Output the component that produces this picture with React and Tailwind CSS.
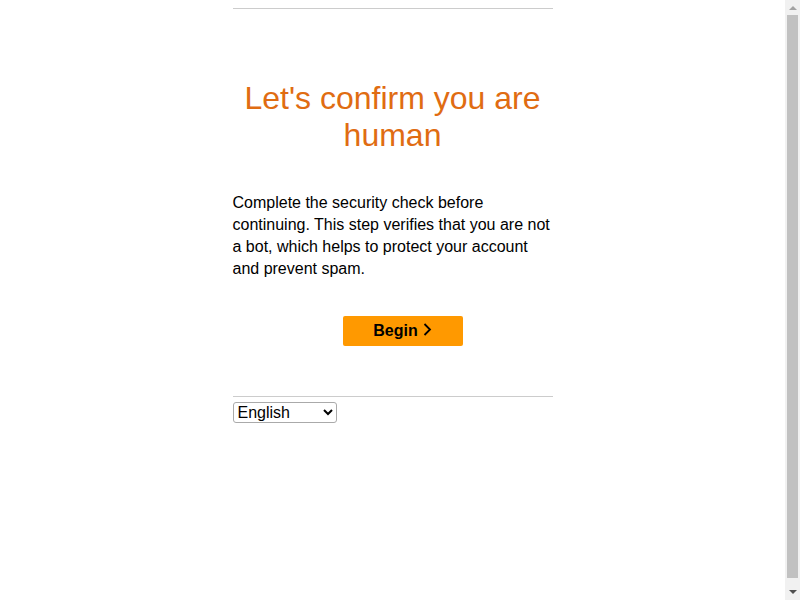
function Scrollbar() {
  return (
    <div className="flex h-[600px] w-[15px] shrink-0 flex-col bg-[#f1f1f1]">
      <div className="flex h-[15px] items-center justify-center">
        <svg width="8" height="5" viewBox="0 0 8 5">
          <path d="M0 5 L4 1 L8 5 Z" fill="#a3a3a3" />
        </svg>
      </div>
      <div className="mx-[2px] h-[563px] bg-[#c1c1c1]" />
      <div className="flex-1" />
      <div className="flex h-[15px] items-center justify-center">
        <svg width="8" height="5" viewBox="0 0 8 5">
          <path d="M0 0 L8 0 L4 4 Z" fill="#505050" />
        </svg>
      </div>
    </div>
  );
}

export default function App() {
  return (
    <div className="flex h-[600px] overflow-hidden bg-white font-['Liberation_Sans',Arial,sans-serif] text-black">
      <main className="flex-1 pt-2">
        <div className="mx-auto w-[320px]">
          <div className="border-t border-[#cccccc]" />

          <h1 className="mt-[71px] text-center text-[32px] leading-[37px] text-[#e06c12]">
            Let's confirm you are human
          </h1>

          <p className="mt-[38px] text-[16px] leading-[22px]">
            Complete the security check before continuing. This step verifies that you are not a bot, which helps to
            protect your account and prevent spam.
          </p>

          <div className="mt-[36px] flex justify-center pl-[20px]">
            <button className="flex h-[30px] w-[120px] items-center justify-center gap-[5px] rounded-[2px] bg-[#ff9900] text-[16px] font-bold">
              Begin
              <svg className="-mt-[3px]" width="9" height="13" viewBox="0 0 9 13" fill="none" stroke="black" strokeWidth="1.8">
                <path d="M1.5 1 L7 6.5 L1.5 12" />
              </svg>
            </button>
          </div>

          <div className="mt-[50px] border-t border-[#cccccc]" />
          <select className="mt-[5px] h-[21px] w-[104px] rounded-[3px] border border-[#aaaaaa] text-[16px]">
            <option>English</option>
            <option>Español</option>
            <option>Deutsch</option>
          </select>
        </div>
      </main>
      <Scrollbar />
    </div>
  );
}
